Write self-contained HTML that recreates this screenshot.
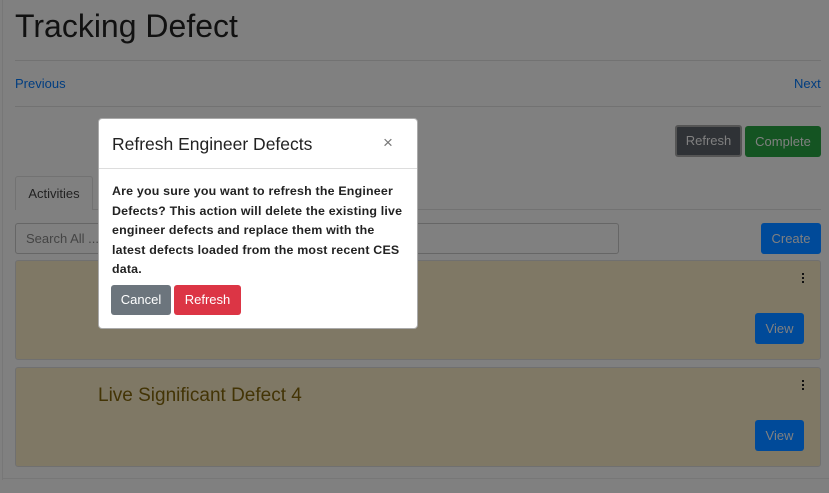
<!DOCTYPE html>
<html><head><style>
body{margin:0;width:829px;height:493px;background:#808080;font-family:"Liberation Sans",sans-serif;position:relative;overflow:hidden}
.a{position:absolute}
.btn{position:absolute;border-radius:3px;color:#808080;font-size:13px;text-align:center;box-sizing:border-box}
</style></head><body>
<div class="a" style="left:2px;top:0;width:1px;height:480px;background:#777"></div>
<div class="a" style="left:3px;top:478px;width:826px;height:1px;background:#777"></div>
<div class="a" style="left:15px;top:8px;font-size:32px;color:#111">Tracking Defect</div>
<div class="a" style="left:15px;top:60px;width:806px;height:1px;background:#727272"></div>
<div class="a" style="left:15px;top:76px;font-size:13px;color:#003d80">Previous</div>
<div class="a" style="left:794px;top:76px;font-size:13px;color:#003d80">Next</div>
<div class="a" style="left:15px;top:106px;width:806px;height:1px;background:#727272"></div>
<div class="btn" style="left:675px;top:125px;width:67px;height:32px;background:#2f3236;border:2px solid #555;line-height:28px">Refresh</div>
<div class="btn" style="left:745px;top:126px;width:76px;height:31px;background:#145422;line-height:31px">Complete</div>
<div class="a" style="left:15px;top:176px;width:78px;height:34px;border:1px solid #727272;border-bottom:none;border-radius:3px 3px 0 0;box-sizing:border-box;font-size:13px;color:#222;text-align:center;line-height:34px">Activities</div>
<div class="a" style="left:93px;top:209px;width:728px;height:1px;background:#727272"></div>
<div class="a" style="left:15px;top:223px;width:604px;height:31px;border:1px solid #666;border-radius:3px;box-sizing:border-box;font-size:13px;color:#444;padding-left:10px;line-height:29px">Search All ...</div>
<div class="btn" style="left:761px;top:223px;width:60px;height:31px;background:#004a99;line-height:31px">Create</div>
<div class="a" style="left:15px;top:260px;width:806px;height:100px;background:#7f7865;border:1px solid #707070;border-radius:3px;box-sizing:border-box"></div>
<div class="a" style="left:15px;top:367px;width:806px;height:100px;background:#7f7865;border:1px solid #707070;border-radius:3px;box-sizing:border-box"></div>
<div class="a" style="left:802px;top:273px;width:2px;height:10px;border-left:2px dotted #111"></div>
<div class="a" style="left:802px;top:380px;width:2px;height:10px;border-left:2px dotted #111"></div>
<div class="btn" style="left:755px;top:313px;width:49px;height:31px;background:#004a99;line-height:31px">View</div>
<div class="btn" style="left:755px;top:420px;width:49px;height:31px;background:#004a99;line-height:31px">View</div>
<div class="a" style="left:98px;top:385px;font-size:19px;color:#433405">Live Significant Defect 4</div>
<div class="a" style="left:98px;top:118px;width:320px;height:211px;background:#fff;border:1px solid #aaa;border-radius:4px;box-sizing:border-box">
<div class="a" style="left:13px;top:15px;font-size:17.5px;color:#222">Refresh Engineer Defects</div>
<div class="a" style="left:284px;top:14px;font-size:17px;color:#777">×</div>
<div class="a" style="left:0;top:49px;width:318px;height:1px;background:#ddd"></div>
<div class="a" style="left:13px;top:63px;width:293px;font-size:12.4px;letter-spacing:0.2px;font-weight:bold;line-height:19.5px;color:#222">Are you sure you want to refresh the Engineer Defects? This action will delete the existing live engineer defects and replace them with the latest defects loaded from the most recent CES data.</div>
<div class="btn" style="left:12px;top:166px;width:60px;height:30px;background:#6c757d;color:#fff;line-height:30px">Cancel</div>
<div class="btn" style="left:75px;top:166px;width:67px;height:30px;background:#dc3545;color:#fff;line-height:30px">Refresh</div>
</div>
</body></html>
